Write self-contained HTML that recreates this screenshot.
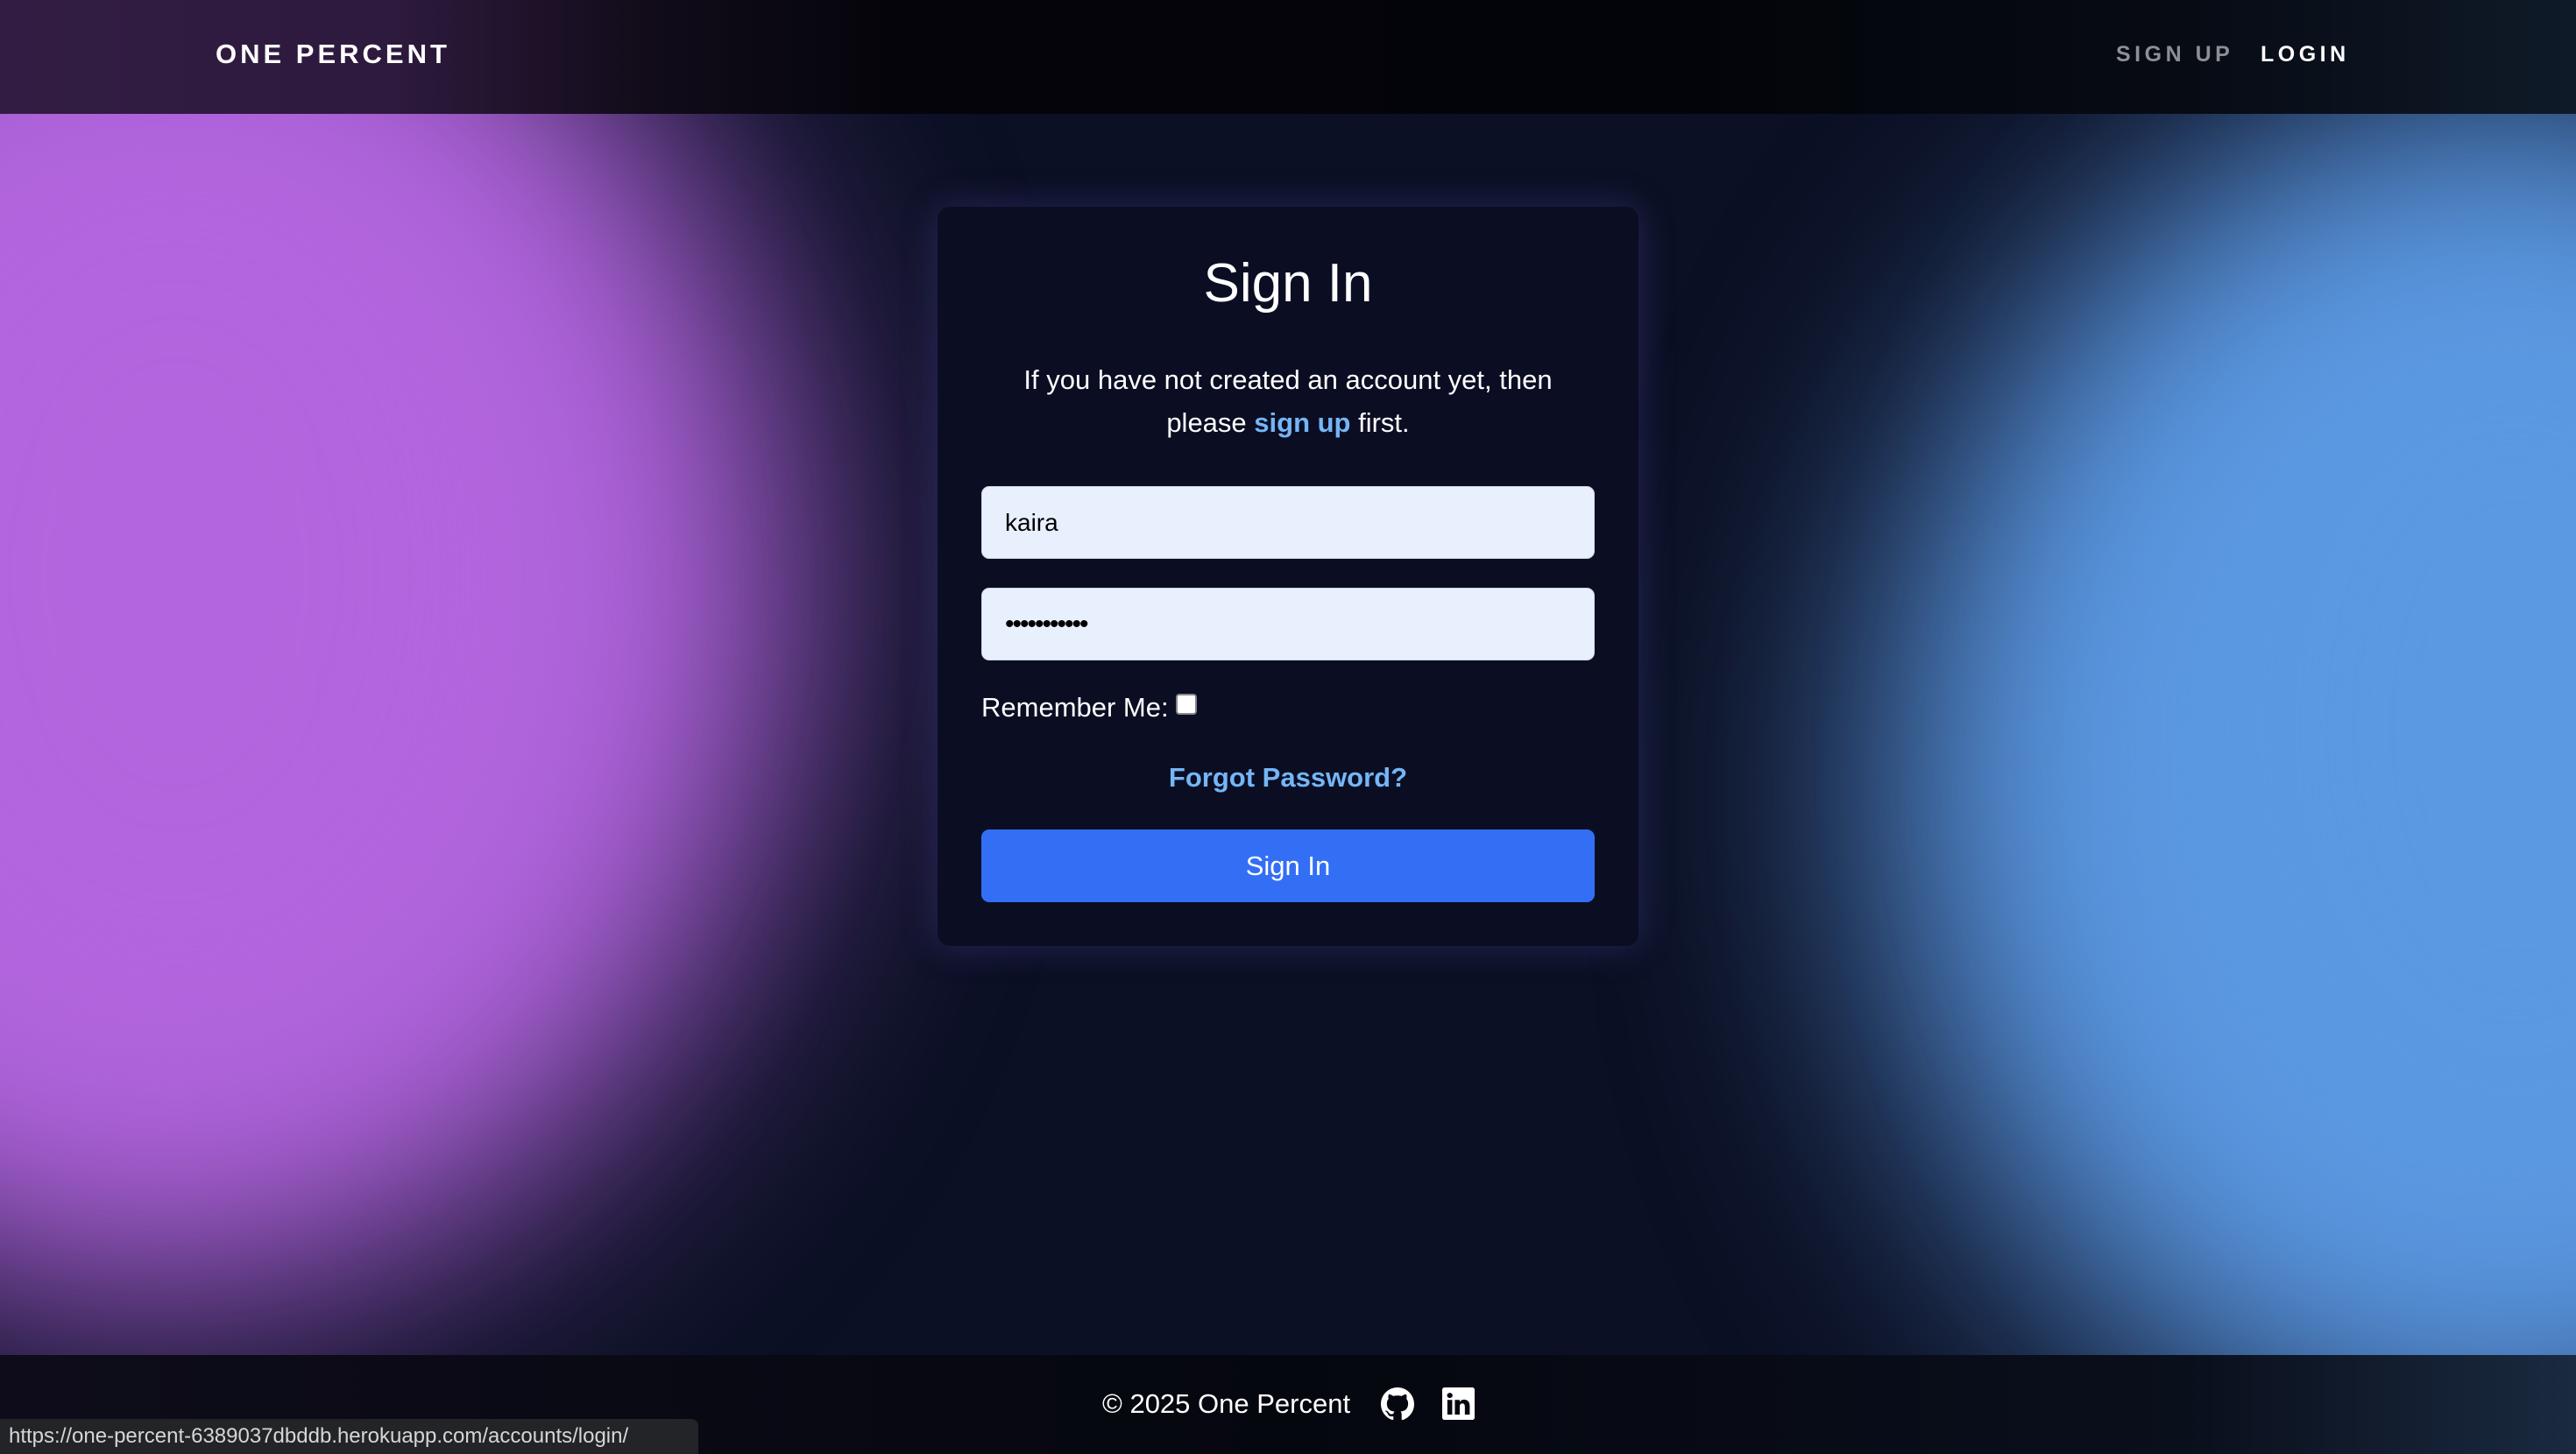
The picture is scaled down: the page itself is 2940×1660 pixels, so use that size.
<!DOCTYPE html>
<html><head><meta charset="utf-8"><style>
*{margin:0;padding:0;box-sizing:border-box}
html,body{width:2940px;height:1660px;overflow:hidden;font-family:"Liberation Sans",Arial,sans-serif;background:#0b1024}
.bg{position:absolute;left:0;top:130px;width:2940px;height:1417px;background:#0b1024;overflow:hidden}
.blob{position:absolute;border-radius:50%;filter:blur(150px)}
nav{position:absolute;left:0;top:0;width:2940px;height:130px;background:linear-gradient(90deg,#321c43 0%,#2e1a3e 15%,#120c1a 25%,#04040a 35%,#030409 65%,#070b14 85%,#0f1a28 100%)}
.logo{position:absolute;left:246px;top:44px;color:#fff;font-weight:bold;font-size:31px;letter-spacing:4px}
.nl{position:absolute;top:48px;font-weight:bold;font-size:25px;letter-spacing:4.5px}
.card{position:absolute;left:1070px;top:236px;width:800px;height:844px;background:#0b0e23;border-radius:14px;box-shadow:0 0 40px rgba(90,80,180,.35)}
h1{position:absolute;top:284px;left:1070px;width:800px;text-align:center;color:#fff;font-weight:normal;font-size:62px;line-height:80px}
.p{position:absolute;top:409px;left:1070px;width:800px;text-align:center;color:#fff;font-size:31px;line-height:49px}
a{color:#74b6f7;font-weight:bold;text-decoration:none}
.in{position:absolute;left:1120px;width:700px;height:83px;background:#e8f0fe;border-radius:9px;border:1px solid #cfd6e4;font-size:28px;padding-left:26px;line-height:81px;color:#000}
.rm{position:absolute;left:1120px;top:790px;color:#fff;font-size:31px}
.cb{display:inline-block;width:24px;height:24px;background:#fff;border-radius:4px;border:2px solid #888;vertical-align:2px;margin-left:8px}
.fp{position:absolute;top:870px;left:1070px;width:800px;text-align:center;font-size:31px}
.btn{position:absolute;left:1120px;top:947px;width:700px;height:83px;background:#336ff5;border-radius:9px;color:#fff;font-size:31px;text-align:center;line-height:83px}
footer{position:absolute;left:0;top:1547px;width:2940px;height:113px;background:linear-gradient(90deg,#0e0c1a,#05070f 50%,#0a0f1c 85%,#1a2a40)}
.ft{position:absolute;left:1258px;top:1585px;color:#fff;font-size:31px}
.st{position:absolute;left:0;top:1620px;width:797px;height:40px;background:#222427;border-top-right-radius:8px;color:#d6d6d6;font-size:24px;padding-left:10px;line-height:40px}
</style></head><body>
<div class="bg">
<div class="blob" style="left:-550px;top:-250px;width:1450px;height:1600px;background:#b063dc"></div>
<div class="blob" style="left:-300px;top:-100px;width:1000px;height:1250px;background:#b265de"></div>
<div class="blob" style="left:2150px;top:0px;width:1400px;height:1550px;background:#5a96e0"></div>
<div class="blob" style="left:2420px;top:100px;width:900px;height:1200px;background:#5b99e2"></div>
</div>
<nav><div class="logo">ONE PERCENT</div>
<div class="nl" style="left:2415px;color:#8d8f96">SIGN UP</div>
<div class="nl" style="left:2580px;color:#fff">LOGIN</div></nav>
<div class="card"></div>
<h1>Sign In</h1>
<div class="p">If you have not created an account yet, then<br>please <a>sign up</a> first.</div>
<div class="in" style="top:555px">kaira</div>
<div class="in" style="top:671px;font-size:30px;letter-spacing:-2px">•••••••••••</div>
<div class="rm">Remember Me:<span class="cb"></span></div>
<div class="fp"><a>Forgot Password?</a></div>
<div class="btn">Sign In</div>
<footer></footer>
<div class="ft">© 2025 One Percent</div>
<svg style="position:absolute;left:1576px;top:1584px" width="38" height="38" viewBox="0 0 16 16"><path fill="#fff" d="M8 0C3.58 0 0 3.58 0 8c0 3.54 2.29 6.53 5.47 7.59.4.07.55-.17.55-.38v-1.33c-2.23.48-2.7-1.07-2.7-1.07-.36-.92-.89-1.17-.89-1.17-.73-.5.05-.49.05-.49.8.06 1.23.83 1.23.83.71 1.22 1.87.87 2.33.66.07-.52.28-.87.5-1.07-1.78-.2-3.65-.89-3.65-3.95 0-.87.31-1.59.82-2.15-.08-.2-.36-1.02.08-2.12 0 0 .67-.21 2.2.82a7.6 7.6 0 0 1 4 0c1.53-1.04 2.2-.82 2.2-.82.44 1.1.16 1.92.08 2.12.51.56.82 1.27.82 2.15 0 3.07-1.87 3.75-3.65 3.95.29.25.54.73.54 1.48v2.2c0 .21.15.46.55.38A8 8 0 0 0 16 8c0-4.42-3.58-8-8-8z"/></svg>
<svg style="position:absolute;left:1646px;top:1584px" width="37" height="37" viewBox="0 0 16 16"><path fill="#fff" d="M0 1.15C0 .52.53 0 1.18 0h13.64C15.47 0 16 .52 16 1.15v13.7c0 .63-.53 1.15-1.18 1.15H1.18C.53 16 0 15.48 0 14.85zm4.94 12.24V6.17H2.54v7.22zM3.74 5.18c.84 0 1.36-.55 1.36-1.25-.02-.71-.52-1.25-1.34-1.25S2.4 3.22 2.4 3.93c0 .7.52 1.25 1.32 1.25zm4.91 8.21V9.36c0-.22.02-.43.08-.59.17-.43.57-.88 1.23-.88.87 0 1.22.66 1.22 1.63v3.87h2.4V9.25c0-2.22-1.18-3.25-2.77-3.25-1.28 0-1.86.7-2.18 1.2V6.17H6.24c.03.68 0 7.22 0 7.22z"/></svg>
<div class="st">https://one-percent-6389037dbddb.herokuapp.com/accounts/login/</div>
</body></html>
